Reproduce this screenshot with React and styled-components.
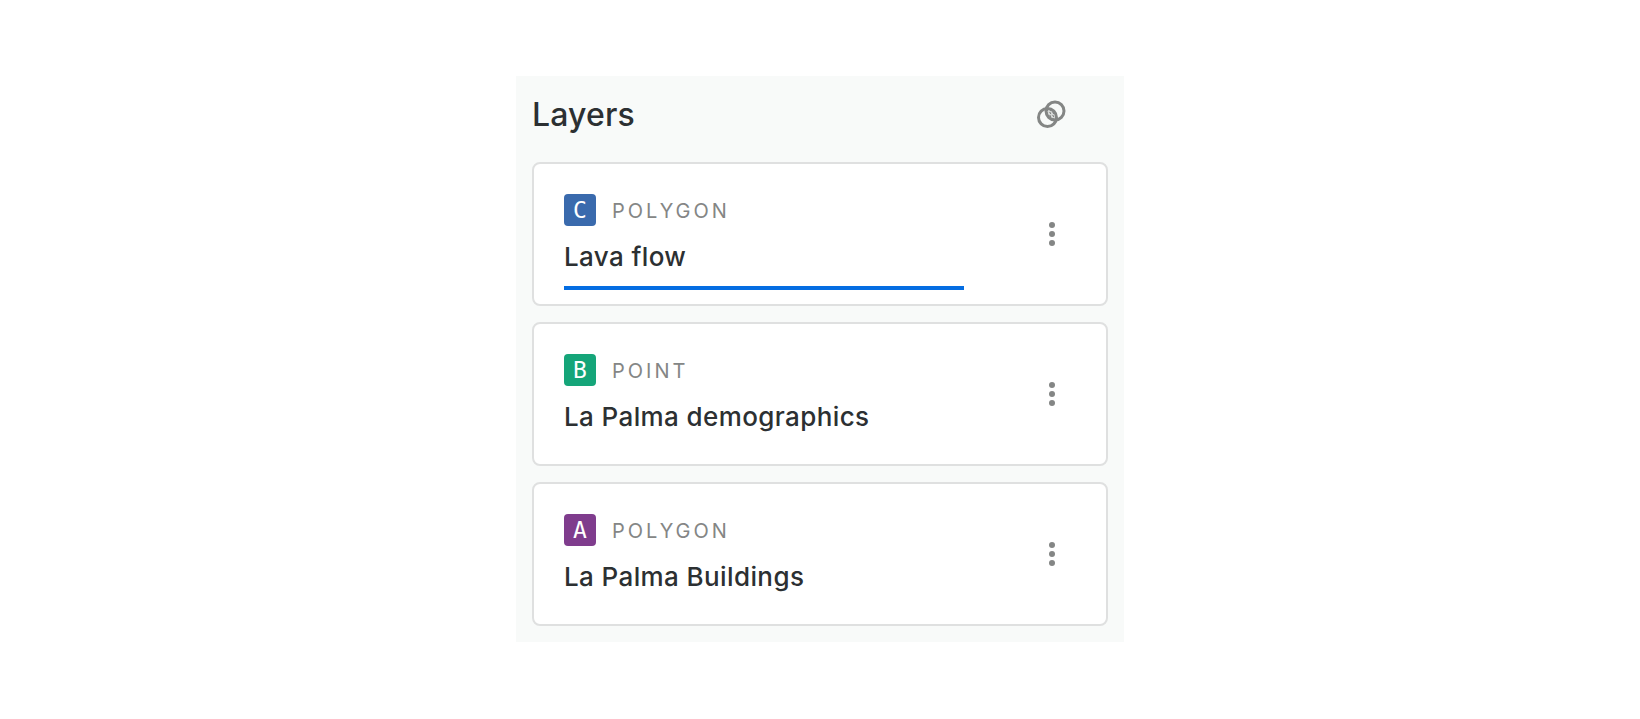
import React, { useState } from "react";
import styled, { createGlobalStyle } from "styled-components";

const GlobalStyle = createGlobalStyle`
  *, *::before, *::after { box-sizing: border-box; }
  body {
    margin: 0;
    background: #ffffff;
    color: #2c3032;
    font-family: Inter, "Liberation Sans", sans-serif;
  }
`;

const Page = styled.main`
  display: flex;
  justify-content: center;
  padding: 76px 16px;
`;

const Panel = styled.section`
  width: 100%;
  max-width: 608px;
  padding: 16px;
  background: #f8faf9;
`;

const Header = styled.header`
  display: flex;
  align-items: center;
  justify-content: space-between;
  height: 46px;
  margin-bottom: 24px;
  padding-right: 32px;
`;

const Title = styled.h2`
  margin: 0;
  font-size: 32px;
  font-weight: 500;
  line-height: 46px;
  letter-spacing: 0.005em;
`;

const IconButton = styled.button`
  display: flex;
  flex: none;
  align-items: center;
  justify-content: center;
  width: 48px;
  height: 48px;
  padding: 0;
  border: 0;
  border-radius: 4px;
  background: transparent;
  color: #848685;
  cursor: pointer;
`;

const LayerList = styled.ul`
  display: flex;
  flex-direction: column;
  gap: 16px;
  margin: 0;
  padding: 0;
  list-style: none;
`;

const LayerCard = styled.li`
  display: flex;
  align-items: center;
  justify-content: space-between;
  gap: 16px;
  padding: 0 30px;
  border: 2px solid #dfe0e0;
  border-radius: 8px;
  background: #ffffff;
`;

const LayerInfo = styled.div`
  flex: 0 1 400px;
  min-width: 0;
  padding: 30px 0 14px;
`;

const LayerMeta = styled.div`
  display: flex;
  align-items: center;
  gap: 16px;
`;

const Badge = styled.span`
  display: flex;
  align-items: center;
  justify-content: center;
  width: 32px;
  height: 32px;
  border-radius: 4px;
  background: ${({ $color }) => $color};
  color: #ffffff;
  font-family: "DejaVu Sans Mono", monospace;
  font-size: 23px;
  line-height: 32px;
`;

const LayerType = styled.span`
  padding-top: 2px;
  color: #848685;
  font-size: 20px;
  line-height: 30px;
  letter-spacing: 0.15em;
  text-transform: uppercase;
`;

const NameInput = styled.input`
  display: block;
  width: 100%;
  height: 64px;
  padding: 0;
  border: 0;
  border-bottom: 4px solid ${({ $active }) => ($active ? "#046de2" : "transparent")};
  border-radius: 0;
  outline: none;
  background: transparent;
  color: inherit;
  font-family: inherit;
  font-size: 26px;
  font-weight: 500;
  letter-spacing: 0.015em;
`;

const BlendIcon = () => (
  <svg width="30" height="30" viewBox="0 0 30 30" fill="none" aria-hidden="true">
    <defs>
      <pattern id="dots" width="3" height="3" patternUnits="userSpaceOnUse">
        <rect width="3" height="3" fill="currentColor" fillOpacity="0.3" />
        <rect width="2" height="1" fill="currentColor" fillOpacity="0.6" />
        <rect x="1" y="1" width="1" height="1" fill="currentColor" />
      </pattern>
      <clipPath id="overlap">
        <circle cx="10.5" cy="17.5" r="9" />
      </clipPath>
    </defs>
    <circle cx="18" cy="11" r="9" fill="url(#dots)" clipPath="url(#overlap)" />
    <circle cx="10.5" cy="17.5" r="9" stroke="currentColor" strokeWidth="3" />
    <circle cx="18" cy="11" r="9" stroke="currentColor" strokeWidth="3" />
  </svg>
);

const KebabIcon = () => (
  <svg width="24" height="24" viewBox="0 0 24 24" fill="currentColor" aria-hidden="true">
    <circle cx="12" cy="3" r="3" />
    <circle cx="12" cy="12" r="3" />
    <circle cx="12" cy="21" r="3" />
  </svg>
);

const initialLayers = [
  { id: "C", type: "Polygon", name: "Lava flow", color: "#3a6aad" },
  { id: "B", type: "Point", name: "La Palma demographics", color: "#15a579" },
  { id: "A", type: "Polygon", name: "La Palma Buildings", color: "#7f3c8d" },
];

export default function App() {
  const [layers, setLayers] = useState(initialLayers);
  const [activeId, setActiveId] = useState("C");

  const rename = (id, name) =>
    setLayers((current) => current.map((l) => (l.id === id ? { ...l, name } : l)));

  return (
    <>
      <GlobalStyle />
      <Page>
        <Panel aria-labelledby="layers-title">
          <Header>
            <Title id="layers-title">Layers</Title>
            <IconButton type="button" aria-label="Layer blending">
              <BlendIcon />
            </IconButton>
          </Header>
          <LayerList>
            {layers.map((layer) => (
              <LayerCard key={layer.id}>
                <LayerInfo>
                  <LayerMeta>
                    <Badge $color={layer.color}>{layer.id}</Badge>
                    <LayerType>{layer.type}</LayerType>
                  </LayerMeta>
                  <NameInput
                    aria-label={`Layer ${layer.id} name`}
                    value={layer.name}
                    $active={layer.id === activeId}
                    onFocus={() => setActiveId(layer.id)}
                    onChange={(e) => rename(layer.id, e.target.value)}
                  />
                </LayerInfo>
                <IconButton type="button" aria-label={`Options for ${layer.name}`}>
                  <KebabIcon />
                </IconButton>
              </LayerCard>
            ))}
          </LayerList>
        </Panel>
      </Page>
    </>
  );
}
